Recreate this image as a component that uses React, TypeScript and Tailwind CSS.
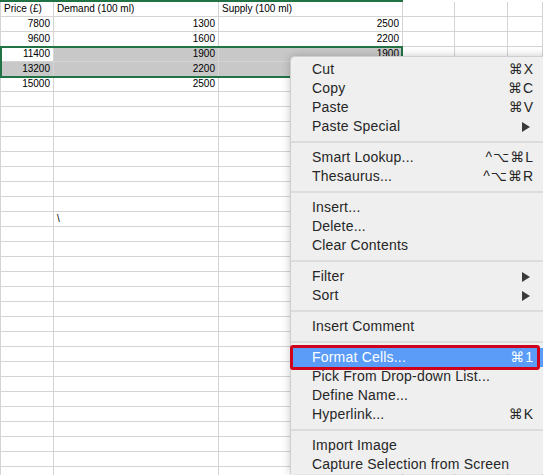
import React from 'react';

const colWidths = ['w-[53px]', 'w-[165px]', 'w-[184px]', 'w-[52px]', 'w-[53px]'];

type Cell = { text?: string; align?: 'left' | 'right'; selected?: boolean };

const headerRow: Cell[] = [
  { text: 'Price (£)' },
  { text: 'Demand (100 ml)' },
  { text: 'Supply (100 ml)' },
];

const data = [
  ['7800', '1300', '2500'],
  ['9600', '1600', '2200'],
  ['11400', '1900', '1900'],
  ['13200', '2200', '1600'],
  ['15000', '2500', '1300'],
];

const buildRows = (): Cell[][] => {
  const rows: Cell[][] = [headerRow];
  data.forEach((r, i) => {
    rows.push(
      r.map((t, c) => ({
        text: t,
        align: 'right',
        // rows 4-5 are the selection; A4 is the active cell
        selected: (i === 2 || i === 3) && !(i === 2 && c === 0),
      }))
    );
  });
  while (rows.length < 32) rows.push([]);
  rows[14] = [{}, { text: '\\' }];
  return rows;
};

const Arrow = () => (
  <svg width="8" height="10" viewBox="0 0 8 10" className="mr-[4px]">
    <path d="M0 0 L8 5 L0 10 Z" fill="#3a3a3a" />
  </svg>
);

type MenuEntry =
  | { sep: true }
  | { label: string; shortcut?: string; arrow?: boolean; active?: boolean; sep?: false };

const menu: MenuEntry[] = [
  { label: 'Cut', shortcut: '⌘X' },
  { label: 'Copy', shortcut: '⌘C' },
  { label: 'Paste', shortcut: '⌘V' },
  { label: 'Paste Special', arrow: true },
  { sep: true },
  { label: 'Smart Lookup...', shortcut: '^⌥⌘L' },
  { label: 'Thesaurus...', shortcut: '^⌥⌘R' },
  { sep: true },
  { label: 'Insert...' },
  { label: 'Delete...' },
  { label: 'Clear Contents' },
  { sep: true },
  { label: 'Filter', arrow: true },
  { label: 'Sort', arrow: true },
  { sep: true },
  { label: 'Insert Comment' },
  { sep: true },
  { label: 'Format Cells...', shortcut: '⌘1', active: true },
  { label: 'Pick From Drop-down List...' },
  { label: 'Define Name...' },
  { label: 'Hyperlink...', shortcut: '⌘K' },
  { sep: true },
  { label: 'Import Image' },
  { label: 'Capture Selection from Screen' },
];

export default function App() {
  const rows = buildRows();

  return (
    <div className="relative w-[543px] h-[475px] overflow-hidden bg-white">
      {/* Sheet */}
      <div className="flex flex-col" style={{ fontFamily: '"Liberation Sans", Arial, sans-serif' }}>
        <div className="flex h-[2px]">
          <div className="w-[403px] bg-[#217346]" />
          <div className="flex-1 bg-white" />
        </div>
        {rows.map((row, ri) => (
          <div key={ri} className="flex h-[15px] border-l border-[#d4d4d4]">
            {[0, 1, 2, 3, 4, 5].map((ci) => {
              const cell = row[ci] || {};
              return (
                <div
                  key={ci}
                  className={[
                    ci < 5 ? colWidths[ci] : 'flex-1',
                    'h-[15px] shrink-0 border-r border-b border-[#d4d4d4] px-[3px] text-[10px] leading-[14px] text-black whitespace-nowrap overflow-hidden',
                    cell.align === 'right' ? 'text-right' : 'text-left',
                    cell.selected ? 'bg-[#c8c8c8]' : 'bg-white',
                  ].join(' ')}
                >
                  {cell.text}
                </div>
              );
            })}
          </div>
        ))}
      </div>

      {/* Selection outline */}
      <div className="absolute top-[46px] left-0 w-[403px] h-[32px] border-2 border-[#217346] pointer-events-none" />

      {/* Context menu */}
      <div
        className="absolute top-[56px] left-[290px] w-[260px] pt-[3px] bg-[#efefef] rounded-tl-[5px] border-l border-t border-[#cfcfcf] shadow-[0_0_8px_rgba(0,0,0,0.22)] text-[14px] text-[#262626] tracking-[0.2px]"
        style={{ fontFamily: '"Liberation Sans", "DejaVu Sans", sans-serif' }}
      >
        {menu.map((m, i) =>
          m.sep ? (
            <div key={i} className="h-[12px] flex items-center">
              <div className="h-[2px] w-full bg-[#dcdcdc]" />
            </div>
          ) : (
            <div
              key={i}
              className={[
                'relative h-[19px] flex items-center justify-between pl-[21px] pr-[16px]',
                m.active ? 'bg-[#5a9cf8] text-white' : '',
              ].join(' ')}
            >
              <span>{m.label}</span>
              {m.shortcut && <span className="tracking-[1px]">{m.shortcut}</span>}
              {m.arrow && <Arrow />}
              {m.active && (
                <div className="absolute -left-px right-[10px] -top-[3px] -bottom-[3px] border-[3px] border-[#d0021b] rounded-[3px]" />
              )}
            </div>
          )
        )}
      </div>
    </div>
  );
}
